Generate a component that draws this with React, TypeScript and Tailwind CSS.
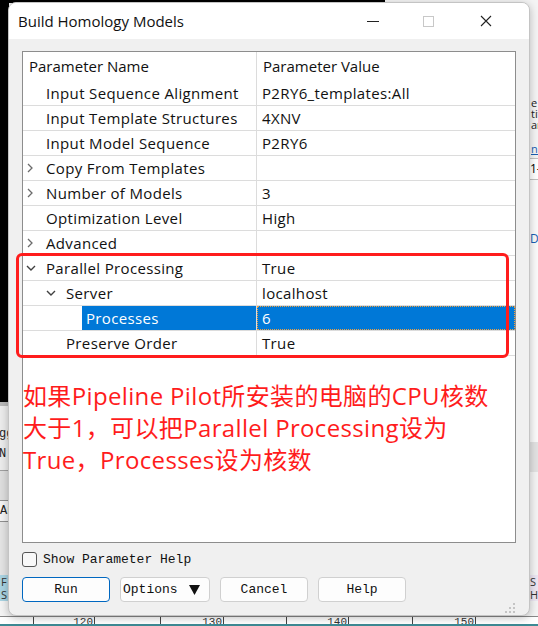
import React from "react";

type Row = {
  name: string;
  value?: string;
  level?: number;
  arrow?: "right" | "down";
  selected?: boolean;
};

const rows: Row[] = [
  { name: "Input Sequence Alignment", value: "P2RY6_templates:All" },
  { name: "Input Template Structures", value: "4XNV" },
  { name: "Input Model Sequence", value: "P2RY6" },
  { name: "Copy From Templates", arrow: "right" },
  { name: "Number of Models", value: "3", arrow: "right" },
  { name: "Optimization Level", value: "High" },
  { name: "Advanced", arrow: "right" },
  { name: "Parallel Processing", value: "True", arrow: "down" },
  { name: "Server", value: "localhost", level: 1, arrow: "down" },
  { name: "Processes", value: "6", level: 2, selected: true },
  { name: "Preserve Order", value: "True", level: 1 },
];

function Chevron({ dir }: { dir: "right" | "down" }) {
  return dir === "right" ? (
    <svg width="8" height="10" viewBox="0 0 8 10">
      <path d="M2 1 L6 5 L2 9" fill="none" stroke="#6b6b6b" strokeWidth="1.3" />
    </svg>
  ) : (
    <svg width="10" height="8" viewBox="0 0 10 8">
      <path d="M1 2 L5 6 L9 2" fill="none" stroke="#404040" strokeWidth="1.4" />
    </svg>
  );
}

function ParamRow({ row }: { row: Row }) {
  const level = row.level ?? 0;
  return (
    <div className="flex h-[25px] border-b border-[#dcdcdc] tracking-[0.35px]">
      <div className="flex w-[233px] items-center">
        <div style={{ width: level * 20 }} />
        <div className="flex w-[19px] items-center pl-[3px]">
          {row.arrow && <Chevron dir={row.arrow} />}
        </div>
        <div
          className={
            row.selected
              ? "flex h-full flex-1 items-center bg-[#0078d7] pl-[4px] text-white"
              : "flex h-full flex-1 items-center pl-[4px] text-[#111]"
          }
        >
          {row.name}
        </div>
      </div>
      <div className="w-px bg-[#dcdcdc]" />
      <div
        className={
          row.selected
            ? "flex flex-1 items-center border border-dotted border-[#f0a040] bg-[#0078d7] pl-[4px] text-white"
            : "flex flex-1 items-center pl-[5px] text-[#111]"
        }
      >
        {row.value}
      </div>
    </div>
  );
}

function Button({ children, primary }: { children: React.ReactNode; primary?: boolean }) {
  return (
    <button
      className={
        primary
          ? "flex h-[25px] w-[88px] items-center justify-center rounded-[4px] border border-[#0067c0] bg-[#fdfdfd] text-[#111]"
          : "flex h-[25px] w-[88px] items-center justify-center rounded-[4px] border border-[#d0d0d0] bg-[#fdfdfd] text-[#111]"
      }
    >
      {children}
    </button>
  );
}

export default function App() {
  return (
    <div className="relative h-[626px] w-[538px] overflow-hidden bg-[#f4f4f4] font-['Open_Sans','Noto_Sans_CJK_SC',sans-serif]">
      {/* desktop behind the dialog */}
      <div className="absolute left-0 top-0 h-[3px] w-[385px] bg-black" />
      <div className="absolute left-0 top-0 h-[402px] w-[9px] bg-black" />
      <div className="absolute left-0 top-[402px] h-[4px] w-[9px] bg-[#b8b8b8]" />
      <div className="absolute left-0 top-[406px] h-[64px] w-[9px] bg-[#ececec] font-['Liberation_Mono',monospace] text-[12px] leading-[20px] text-[#222]">
        <div className="mt-[18px] -ml-[1px]">
          gg
          <br />
          N.
        </div>
      </div>
      <div className="absolute left-0 top-[470px] h-[30px] w-[9px] border-t border-[#a0a0a0] bg-[#dedede]" />
      <div className="absolute left-0 top-[500px] h-[22px] w-[9px] border-y border-[#909090] bg-[#f4f4f4] font-['Liberation_Mono',monospace] text-[12px] leading-[20px] text-[#222]">
        An
      </div>
      <div className="absolute left-0 top-[522px] h-[53px] w-[9px] bg-[#e4e4e4]" />
      <div className="absolute left-0 top-[575px] h-[26px] w-[9px] bg-[#a9d3e2] pl-[1px] text-[11px] leading-[13px] text-[#333]">
        F
        <br />S
      </div>
      <div className="absolute left-[531px] top-[97px] text-[11px] leading-[11px] text-[#222]">
        e
        <br />
        tit
        <br />
        ar
      </div>
      <div className="absolute left-[531px] top-[143px] text-[11px] leading-[12px] text-[#1a5fb4] underline">nn</div>
      <div className="absolute left-[530px] top-[158px] h-[22px] w-[8px] border-y border-[#c0c0c0] bg-white text-[12px] leading-[20px]">1-</div>
      <div className="absolute left-[530px] top-[180px] h-[262px] w-[8px] bg-[#fafafa]">
        <div className="mt-[50px] text-[12px] text-[#1a5fb4]">Da</div>
      </div>
      <div className="absolute left-[530px] top-[442px] h-[30px] w-[8px] bg-[#e2e2e2]" />
      <div className="absolute left-[530px] top-[575px] h-[26px] w-[8px] bg-[#ece6f2] text-[11px] leading-[13px] text-[#333]">
        S
        <br />H
      </div>
      <div className="absolute bottom-0 left-0 h-[10px] w-[538px] border-t border-[#888] bg-white font-['Liberation_Mono',monospace] text-[11px] leading-[10px] text-[#333]">
        <div className="flex">
          <div className="w-[34px] border-r border-[#444]" />
          <div className="w-[61px] border-r border-[#444] pr-[1px] text-right">120</div>
          <div className="w-[66px] border-r border-[#444]" />
          <div className="w-[63px] border-r border-[#444] pr-[1px] text-right">130</div>
          <div className="w-[63px] border-r border-[#444]" />
          <div className="w-[62px] border-r border-[#444] pr-[1px] text-right">140</div>
          <div className="w-[64px] border-r border-[#444]" />
          <div className="w-[63px] border-r border-[#444] pr-[1px] text-right">150</div>
        </div>
      </div>
      <div className="absolute bottom-0 left-0 h-[2px] w-[538px] bg-[#3d8a94]" />

      {/* dialog window */}
      <div className="absolute left-[8px] top-[2px] flex h-[614px] w-[522px] flex-col overflow-hidden rounded-[8px] border border-[#c4c4c4] bg-[#f0f0f0] shadow-[0_2px_8px_rgba(0,0,0,0.25)]">
        <div className="flex h-[36px] items-center bg-white pl-[9px] text-[15px] text-[#111]">
          <span className="flex-1">Build Homology Models</span>
          <div className="flex w-[12px] items-center">
            <div className="h-px w-[12px] bg-[#222]" />
          </div>
          <div className="ml-[44px] h-[11px] w-[11px] border border-[#c8c8c8]" />
          <svg className="ml-[46px] mr-[37px]" width="12" height="12" viewBox="0 0 12 12">
            <path d="M1 1 L11 11 M11 1 L1 11" stroke="#222" strokeWidth="1.1" />
          </svg>
        </div>

        <div className="flex flex-1 flex-col px-[13px] pt-[12px]">
          <div className="h-[492px] border border-[#8d8d8d] bg-white text-[15px]">
            <div className="flex h-[29px] text-[#111]">
              <div className="flex w-[233px] items-center pl-[6px]">Parameter Name</div>
              <div className="w-px bg-[#dcdcdc]" />
              <div className="flex flex-1 items-center pl-[6px]">Parameter Value</div>
            </div>
            {rows.map((r) => (
              <ParamRow key={r.name} row={r} />
            ))}
            <div className="mt-[24px] whitespace-nowrap text-[24px] leading-[32px] tracking-[0.35px] text-[#ff1c1c]">
              如果Pipeline Pilot所安装的电脑的CPU核数
              <br />
              大于1，可以把Parallel Processing设为
              <br />
              True，Processes设为核数
            </div>
          </div>

          <div className="mt-[8px] flex h-[17px] items-center font-['Liberation_Mono',monospace] text-[13px] text-[#111]">
            <div className="h-[15px] w-[15px] rounded-[3px] border border-[#555] bg-[#f8f8f8]" />
            <span className="ml-[6px]">Show Parameter Help</span>
          </div>

          <div className="mt-[9px] flex gap-[10px] font-['Liberation_Mono',monospace] text-[13px]">
            <Button primary>Run</Button>
            <button className="flex h-[25px] w-[90px] items-center rounded-[4px] border border-[#d0d0d0] bg-[#fdfdfd] pl-[2px] text-[#111]">
              Options
              <svg className="ml-[11px]" width="11" height="10" viewBox="0 0 11 10">
                <polygon points="0,0 11,0 5.5,10" fill="#111" />
              </svg>
            </button>
            <Button>Cancel</Button>
            <Button>Help</Button>
          </div>
        </div>
        <svg className="absolute bottom-[2px] right-[14px]" width="10" height="10" viewBox="0 0 10 10">
          <g fill="#c4c4c4">
            <rect x="8" y="0" width="2" height="2" />
            <rect x="4" y="4" width="2" height="2" />
            <rect x="8" y="4" width="2" height="2" />
            <rect x="0" y="8" width="2" height="2" />
            <rect x="4" y="8" width="2" height="2" />
            <rect x="8" y="8" width="2" height="2" />
          </g>
        </svg>
      </div>

      {/* red annotation box */}
      <div className="absolute left-[16px] top-[253px] h-[105px] w-[493px] rounded-[6px] border-[3px] border-[#ff1c1c]" />
    </div>
  );
}
